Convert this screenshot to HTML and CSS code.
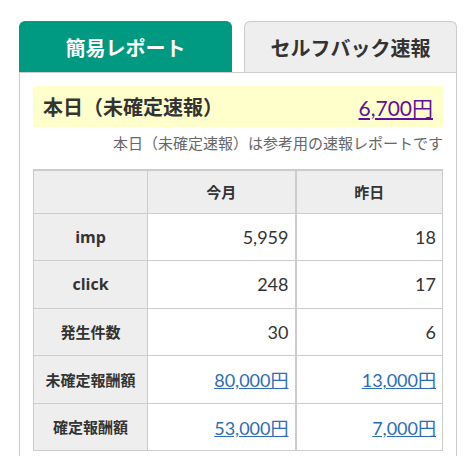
FILE: index.html
```html
<!DOCTYPE html>
<html lang="ja">
<head>
  <meta charset="UTF-8">
  <meta name="viewport" content="width=device-width, initial-scale=1.0">
  <title>簡易レポート</title>
  <link rel="stylesheet" href="styles.css">
</head>
<body>
  <div class="report">
    <!-- タブ -->
    <nav class="tabs">
      <a class="tab active" href="#simple">簡易レポート</a>
      <a class="tab" href="#selfback">セルフバック速報</a>
    </nav>

    <div class="panel" id="simple">
      <!-- 本日の速報 -->
      <div class="today">
        <span class="today-label">本日（未確定速報）</span>
        <a class="today-amount" href="#today">6,700円</a>
      </div>
      <p class="note">本日（未確定速報）は参考用の速報レポートです</p>

      <!-- 集計表 -->
      <table class="stats">
        <colgroup>
          <col class="col-label">
          <col class="col-month">
          <col class="col-day">
        </colgroup>
        <thead>
          <tr>
            <th></th>
            <th>今月</th>
            <th class="sep">昨日</th>
          </tr>
        </thead>
        <tbody>
          <tr>
            <th class="en">imp</th>
            <td>5,959</td>
            <td class="sep">18</td>
          </tr>
          <tr>
            <th class="en">click</th>
            <td>248</td>
            <td class="sep">17</td>
          </tr>
          <tr>
            <th>発生件数</th>
            <td>30</td>
            <td class="sep">6</td>
          </tr>
          <tr>
            <th>未確定報酬額</th>
            <td><a href="#unconfirmed-month">80,000円</a></td>
            <td class="sep"><a href="#unconfirmed-day">13,000円</a></td>
          </tr>
          <tr>
            <th>確定報酬額</th>
            <td><a href="#confirmed-month">53,000円</a></td>
            <td class="sep"><a href="#confirmed-day">7,000円</a></td>
          </tr>
        </tbody>
      </table>
    </div>
  </div>
</body>
</html>
```

FILE: styles.css
```css
/* 共通 */
* {
  margin: 0;
  padding: 0;
  box-sizing: border-box;
}
body {
  background: #fff;
  color: #333;
  font-family: Lato, "Noto Sans CJK JP", sans-serif;
  text-spacing-trim: space-all;
}
.report {
  width: 438px;
  margin: 21px 0 0 19px;
}
/* タブ */
.tabs {
  display: flex;
  gap: 12px;
  height: 51px;
}
.tab {
  flex: 1;
  display: flex;
  justify-content: center;
  align-items: center;
  border-radius: 6px 6px 0 0;
  font-family: "Noto Sans CJK JP", sans-serif;
  font-size: 20px;
  font-weight: bold;
  text-decoration: none;
  color: #333;
  background: #eee;
  border: 1px solid #ccc;
  border-bottom: none;
}
.tab.active {
  background: #009a82;
  border-color: #009a82;
  color: #fff;
}
/* パネル */
.panel {
  border: 1px solid #ccc;
  padding: 13px 13px 0 13px;
  min-height: 400px;
}
.today {
  display: flex;
  justify-content: space-between;
  align-items: center;
  height: 41px;
  padding: 0 10px;
  background: #ffc;
}
.today-label {
  font-family: "Noto Sans CJK JP", sans-serif;
  font-size: 20px;
  font-weight: bold;
}
.today-amount {
  font-size: 21px;
  color: #60109c;
}
.note {
  margin-top: 6px;
  text-align: right;
  font-family: "Noto Sans CJK JP", sans-serif;
  font-size: 15px;
  color: #666;
  line-height: 20px;
}
/* 集計表 */
.stats {
  margin-top: 16px;
  width: 410px;
  border-collapse: collapse;
  border-top: 2px solid #ccc;
  table-layout: fixed;
}
.col-label {
  width: 114px;
}
.col-month {
  width: 148px;
}
.stats th,
.stats td {
  border: 1px solid #ccc;
  height: 47.5px;
}
.stats thead th {
  height: 43px;
}
.stats th {
  background: #eee;
  text-align: center;
  font-weight: bold;
  font-size: 15px;
}
.stats th.en {
  font-family: "Open Sans", sans-serif;
  font-size: 16px;
}
.stats td {
  text-align: right;
  padding-right: 6px;
  font-size: 18px;
}
.stats .sep {
  border-left-width: 2px;
}
.stats td a {
  color: #2a6db5;
}
```
